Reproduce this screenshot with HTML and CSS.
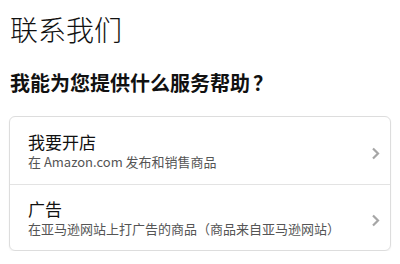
FILE: index.html
```html
<!DOCTYPE html>
<html lang="zh-CN">
<head>
<meta charset="utf-8">
<link rel="stylesheet" href="styles.css">
</head>
<body>
<main class="page">
  <h1 class="title">联系我们</h1>
  <h2 class="subtitle">我能为您提供什么服务帮助<span class="q">？</span></h2>
  <div class="card">
    <a class="row" href="#">
      <div class="text">
        <div class="row-title">我要开店</div>
        <div class="row-desc">在 Amazon.com 发布和销售商品</div>
      </div>
      <svg class="chev" width="9" height="13" viewBox="0 0 9 13"><path d="M2 1.5 L7 6.5 L2 11.5" fill="none" stroke="#a6a6a6" stroke-width="2.2"/></svg>
    </a>
    <a class="row" href="#">
      <div class="text">
        <div class="row-title">广告</div>
        <div class="row-desc">在亚马逊网站上打广告的商品<span class="p">（</span>商品来自亚马逊网站<span class="p">）</span></div>
      </div>
      <svg class="chev" width="9" height="13" viewBox="0 0 9 13"><path d="M2 1.5 L7 6.5 L2 11.5" fill="none" stroke="#a6a6a6" stroke-width="2.2"/></svg>
    </a>
  </div>
</main>
</body>
</html>
```

FILE: styles.css
```css
html, body {
  margin: 0;
  padding: 0;
  background: #fff;
}
body {
  font-family: "Noto Sans CJK SC", "Open Sans", sans-serif;
  color: #111;
}
.page {
  padding: 9px 9px 0 9px;
  width: 382px;
}
.title {
  margin: 0 0 0 1px;
  font-size: 28px;
  font-weight: 300;
  line-height: 40px;
  color: #111;
}
.subtitle {
  margin: 20px 0 0 1px;
  font-size: 20px;
  font-weight: 700;
  line-height: 28px;
  color: #111;
}
.q {
  font-family: "Noto Sans CJK TC", "Noto Sans CJK SC", sans-serif;
  margin-left: 3px;
}
.p {
  font-family: "Noto Sans CJK KR", "Noto Sans CJK SC", sans-serif;
}
.card {
  margin-top: 19px;
  border: 1px solid #dddddd;
  border-radius: 6px;
  box-shadow: 0 1px 2px rgba(0,0,0,0.06);
}
.row {
  display: flex;
  align-items: center;
  justify-content: space-between;
  padding: 0 10px 0 18px;
  height: 67px;
  text-decoration: none;
  color: inherit;
}
.row + .row {
  border-top: 1px solid #e3e3e3;
  height: 65px;
}
.text {
  display: flex;
  flex-direction: column;
}
.row-title {
  font-size: 17px;
  line-height: 22px;
  color: #111;
}
.row-desc {
  font-size: 13px;
  line-height: 18px;
  color: #555;
}
.chev {
  margin-top: 6px;
}
```
